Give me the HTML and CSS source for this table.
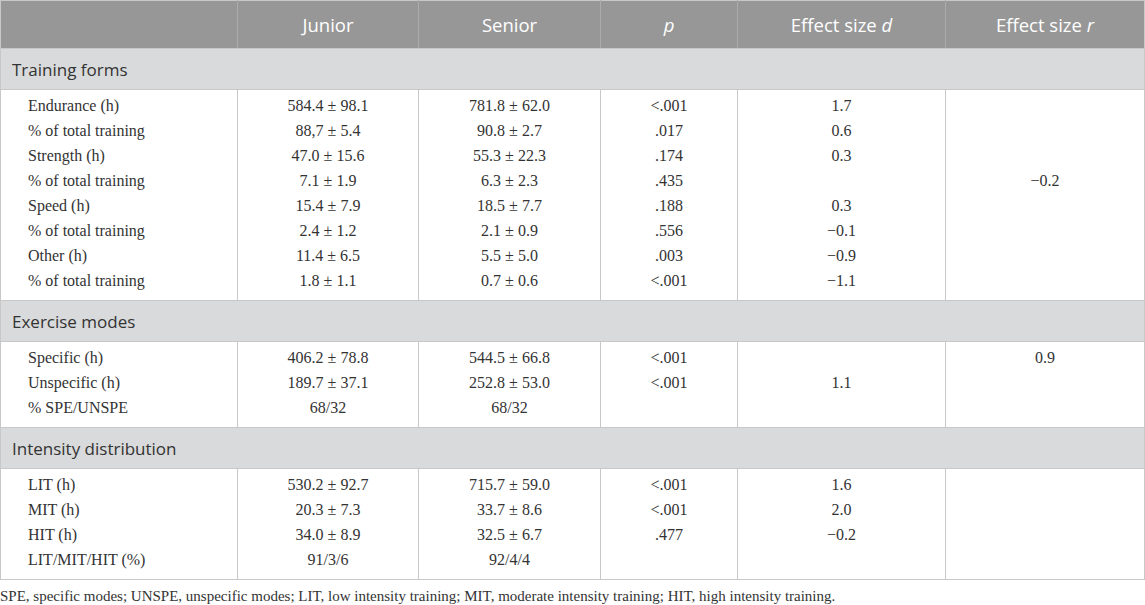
FILE: index.html
```html
<!DOCTYPE html>
<html lang="en">
<head>
    <meta charset="UTF-8">
    <title>Training characteristics</title>
    <link rel="stylesheet" href="styles.css">
</head>
<body>
    <table class="data-table">
        <colgroup>
            <col class="c-label">
            <col class="c-junior">
            <col class="c-senior">
            <col class="c-p">
            <col class="c-d">
            <col class="c-r">
        </colgroup>
        <thead>
            <tr>
                <th></th>
                <th>Junior</th>
                <th>Senior</th>
                <th><i>p</i></th>
                <th>Effect size <i>d</i></th>
                <th>Effect size <i>r</i></th>
            </tr>
        </thead>

        <!-- Training forms -->
        <tbody>
            <tr class="section"><td colspan="6">Training forms</td></tr>
            <tr class="first">
                <td class="label">Endurance (h)</td>
                <td>584.4 ± 98.1</td>
                <td>781.8 ± 62.0</td>
                <td>&lt;.001</td>
                <td>1.7</td>
                <td></td>
            </tr>
            <tr>
                <td class="label">% of total training</td>
                <td>88,7 ± 5.4</td>
                <td>90.8 ± 2.7</td>
                <td>.017</td>
                <td>0.6</td>
                <td></td>
            </tr>
            <tr>
                <td class="label">Strength (h)</td>
                <td>47.0 ± 15.6</td>
                <td>55.3 ± 22.3</td>
                <td>.174</td>
                <td>0.3</td>
                <td></td>
            </tr>
            <tr>
                <td class="label">% of total training</td>
                <td>7.1 ± 1.9</td>
                <td>6.3 ± 2.3</td>
                <td>.435</td>
                <td></td>
                <td>−0.2</td>
            </tr>
            <tr>
                <td class="label">Speed (h)</td>
                <td>15.4 ± 7.9</td>
                <td>18.5 ± 7.7</td>
                <td>.188</td>
                <td>0.3</td>
                <td></td>
            </tr>
            <tr>
                <td class="label">% of total training</td>
                <td>2.4 ± 1.2</td>
                <td>2.1 ± 0.9</td>
                <td>.556</td>
                <td>−0.1</td>
                <td></td>
            </tr>
            <tr>
                <td class="label">Other (h)</td>
                <td>11.4 ± 6.5</td>
                <td>5.5 ± 5.0</td>
                <td>.003</td>
                <td>−0.9</td>
                <td></td>
            </tr>
            <tr class="last">
                <td class="label">% of total training</td>
                <td>1.8 ± 1.1</td>
                <td>0.7 ± 0.6</td>
                <td>&lt;.001</td>
                <td>−1.1</td>
                <td></td>
            </tr>
        </tbody>

        <!-- Exercise modes -->
        <tbody>
            <tr class="section"><td colspan="6">Exercise modes</td></tr>
            <tr class="first">
                <td class="label">Specific (h)</td>
                <td>406.2 ± 78.8</td>
                <td>544.5 ± 66.8</td>
                <td>&lt;.001</td>
                <td></td>
                <td>0.9</td>
            </tr>
            <tr>
                <td class="label">Unspecific (h)</td>
                <td>189.7 ± 37.1</td>
                <td>252.8 ± 53.0</td>
                <td>&lt;.001</td>
                <td>1.1</td>
                <td></td>
            </tr>
            <tr class="last">
                <td class="label">% SPE/UNSPE</td>
                <td>68/32</td>
                <td>68/32</td>
                <td></td>
                <td></td>
                <td></td>
            </tr>
        </tbody>

        <!-- Intensity distribution -->
        <tbody>
            <tr class="section"><td colspan="6">Intensity distribution</td></tr>
            <tr class="first">
                <td class="label">LIT (h)</td>
                <td>530.2 ± 92.7</td>
                <td>715.7 ± 59.0</td>
                <td>&lt;.001</td>
                <td>1.6</td>
                <td></td>
            </tr>
            <tr>
                <td class="label">MIT (h)</td>
                <td>20.3 ± 7.3</td>
                <td>33.7 ± 8.6</td>
                <td>&lt;.001</td>
                <td>2.0</td>
                <td></td>
            </tr>
            <tr>
                <td class="label">HIT (h)</td>
                <td>34.0 ± 8.9</td>
                <td>32.5 ± 6.7</td>
                <td>.477</td>
                <td>−0.2</td>
                <td></td>
            </tr>
            <tr class="last">
                <td class="label">LIT/MIT/HIT (%)</td>
                <td>91/3/6</td>
                <td>92/4/4</td>
                <td></td>
                <td></td>
                <td></td>
            </tr>
        </tbody>
    </table>

    <p class="footnote">SPE, specific modes; UNSPE, unspecific modes; LIT, low intensity training; MIT, moderate intensity training; HIT, high intensity training.</p>
</body>
</html>
```

FILE: styles.css
```css
/* Reset */
* {
    margin: 0;
    padding: 0;
    box-sizing: border-box;
}

body {
    background: #fff;
    color: #333;
    font-family: 'Liberation Serif', 'Times New Roman', serif;
}

.data-table {
    width: 1144px;
    border-collapse: collapse;
    table-layout: fixed;
    border: 1px solid #c8c8c8;
}

.c-label { width: 237px; }
.c-junior { width: 181px; }
.c-senior { width: 182px; }
.c-p { width: 137px; }
.c-d { width: 208px; }
.c-r { width: 199px; }

/* Header */
thead th {
    height: 48px;
    background: #979797;
    color: #fff;
    font-family: 'Open Sans', 'Noto Sans', sans-serif;
    font-size: 18.5px;
    font-weight: normal;
    text-align: center;
    border-left: 1px solid #ababab;
    border-bottom: 1px solid #c8c8c8;
}

thead th:first-child {
    border-left: none;
}

/* Section rows */
.section td {
    height: 41px;
    background: #d9dadb;
    font-family: 'Open Sans', 'Noto Sans', sans-serif;
    font-size: 17px;
    color: #333;
    text-align: left;
    padding: 0 11px;
    border-top: 1px solid #c8c8c8;
    border-bottom: 1px solid #c8c8c8;
}

/* Data rows */
tbody td {
    height: 25px;
    font-size: 16px;
    text-align: center;
    vertical-align: middle;
    border-left: 1px solid #c8c8c8;
    border-right: 1px solid #c8c8c8;
    white-space: nowrap;
}

tbody td.label {
    text-align: left;
    padding-left: 27px;
}

tr.first td {
    height: 29px;
    padding-top: 4px;
}

tr.last td {
    height: 32px;
    padding-bottom: 7px;
}

.footnote {
    font-size: 15px;
    color: #333;
    margin-top: 8px;
}
```
